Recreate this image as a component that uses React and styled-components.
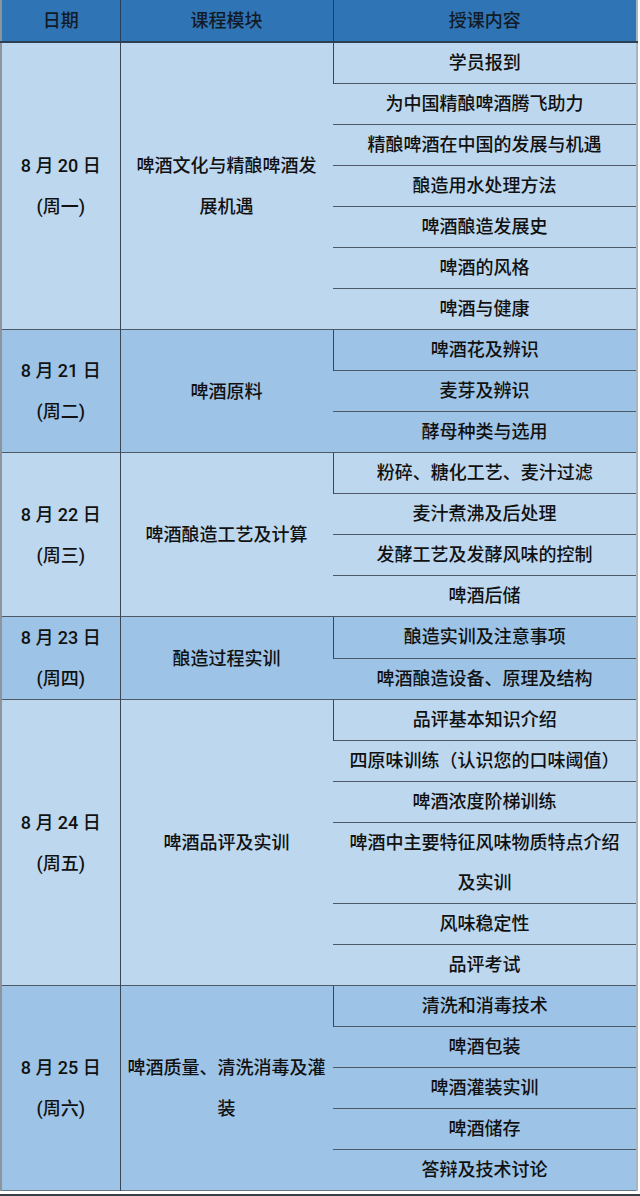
import React from "react";
import styled, { createGlobalStyle } from "styled-components";

const GlobalStyle = createGlobalStyle`
  html, body {
    margin: 0;
    padding: 0;
    background: #ffffff;
  }
  body {
    font-family: Roboto, "Noto Sans CJK SC", sans-serif;
  }
`;

// each day: date, weekday, module (as its wrapped lines), lessons
const schedule = [
  {
    date: "8 月 20 日",
    week: "(周一)",
    module: ["啤酒文化与精酿啤酒发", "展机遇"],
    lessons: [
      "学员报到",
      "为中国精酿啤酒腾飞助力",
      "精酿啤酒在中国的发展与机遇",
      "酿造用水处理方法",
      "啤酒酿造发展史",
      "啤酒的风格",
      "啤酒与健康",
    ],
  },
  {
    date: "8 月 21 日",
    week: "(周二)",
    module: ["啤酒原料"],
    lessons: ["啤酒花及辨识", "麦芽及辨识", "酵母种类与选用"],
  },
  {
    date: "8 月 22 日",
    week: "(周三)",
    module: ["啤酒酿造工艺及计算"],
    lessons: [
      "粉碎、糖化工艺、麦汁过滤",
      "麦汁煮沸及后处理",
      "发酵工艺及发酵风味的控制",
      "啤酒后储",
    ],
  },
  {
    date: "8 月 23 日",
    week: "(周四)",
    module: ["酿造过程实训"],
    lessons: ["酿造实训及注意事项", "啤酒酿造设备、原理及结构"],
  },
  {
    date: "8 月 24 日",
    week: "(周五)",
    module: ["啤酒品评及实训"],
    lessons: [
      "品评基本知识介绍",
      "四原味训练（认识您的口味阈值）",
      "啤酒浓度阶梯训练",
      "啤酒中主要特征风味物质特点介绍及实训",
      "风味稳定性",
      "品评考试",
    ],
  },
  {
    date: "8 月 25 日",
    week: "(周六)",
    module: ["啤酒质量、清洗消毒及灌", "装"],
    lessons: ["清洗和消毒技术", "啤酒包装", "啤酒灌装实训", "啤酒储存", "答辩及技术讨论"],
  },
];

const Page = styled.div`
  width: 640px;
  height: 1196px;
  background: #ffffff;
  border-bottom: 2px solid #3a3f46;
  box-sizing: border-box;
`;

const Table = styled.table`
  width: 638px;
  border-collapse: collapse;
  table-layout: fixed;
  border-left: 2px solid #8d949c;
  border-right: 2px solid #aab4bf;
  border-bottom: 1px solid #6b7682;
  font-size: 18px;
  font-weight: 500;
  color: #111111;
`;

const Col = styled.col`
  width: ${(p) => p.$w}px;
`;

const HeadCell = styled.th`
  height: 41px;
  padding: 0;
  background: #2f74b5;
  color: #121c28;
  font-weight: 500;
  text-align: center;
  vertical-align: middle;
  border-left: 1px solid #2a3f57;
  border-bottom: 2px solid #2c4055;
  line-height: 41px;
  &:first-child {
    border-left: none;
  }
`;

const Cell = styled.td`
  padding: 0 ${(p) => (p.$tight ? 4 : 10)}px;
  background: ${(p) => (p.$dark ? "#9dc3e6" : "#bdd7ee")};
  text-align: center;
  vertical-align: middle;
  line-height: 40px;
  border-left: 1px solid #3b4654;
  border-top: 1px solid #4d5967;
  &:first-child {
    border-left: none;
  }
`;

const Line = styled.div`
  line-height: 41px;
  white-space: nowrap;
`;

export default function App() {
  return (
    <Page>
      <GlobalStyle />
      <Table>
        <colgroup>
          <Col $w={119} />
          <Col $w={213} />
          <Col $w={304} />
        </colgroup>
        <thead>
          <tr>
            <HeadCell>日期</HeadCell>
            <HeadCell>课程模块</HeadCell>
            <HeadCell>授课内容</HeadCell>
          </tr>
        </thead>
        <tbody>
          {schedule.map((day, di) =>
            day.lessons.map((lesson, li) => (
              <tr key={`${di}-${li}`}>
                {li === 0 && (
                  <>
                    <Cell $dark={di % 2 === 1} rowSpan={day.lessons.length}>
                      <Line>{day.date}</Line>
                      <Line>{day.week}</Line>
                    </Cell>
                    <Cell $dark={di % 2 === 1} $tight rowSpan={day.lessons.length}>
                      {day.module.map((m) => (
                        <Line key={m}>{m}</Line>
                      ))}
                    </Cell>
                  </>
                )}
                <Cell $dark={di % 2 === 1}>{lesson}</Cell>
              </tr>
            ))
          )}
        </tbody>
      </Table>
    </Page>
  );
}
